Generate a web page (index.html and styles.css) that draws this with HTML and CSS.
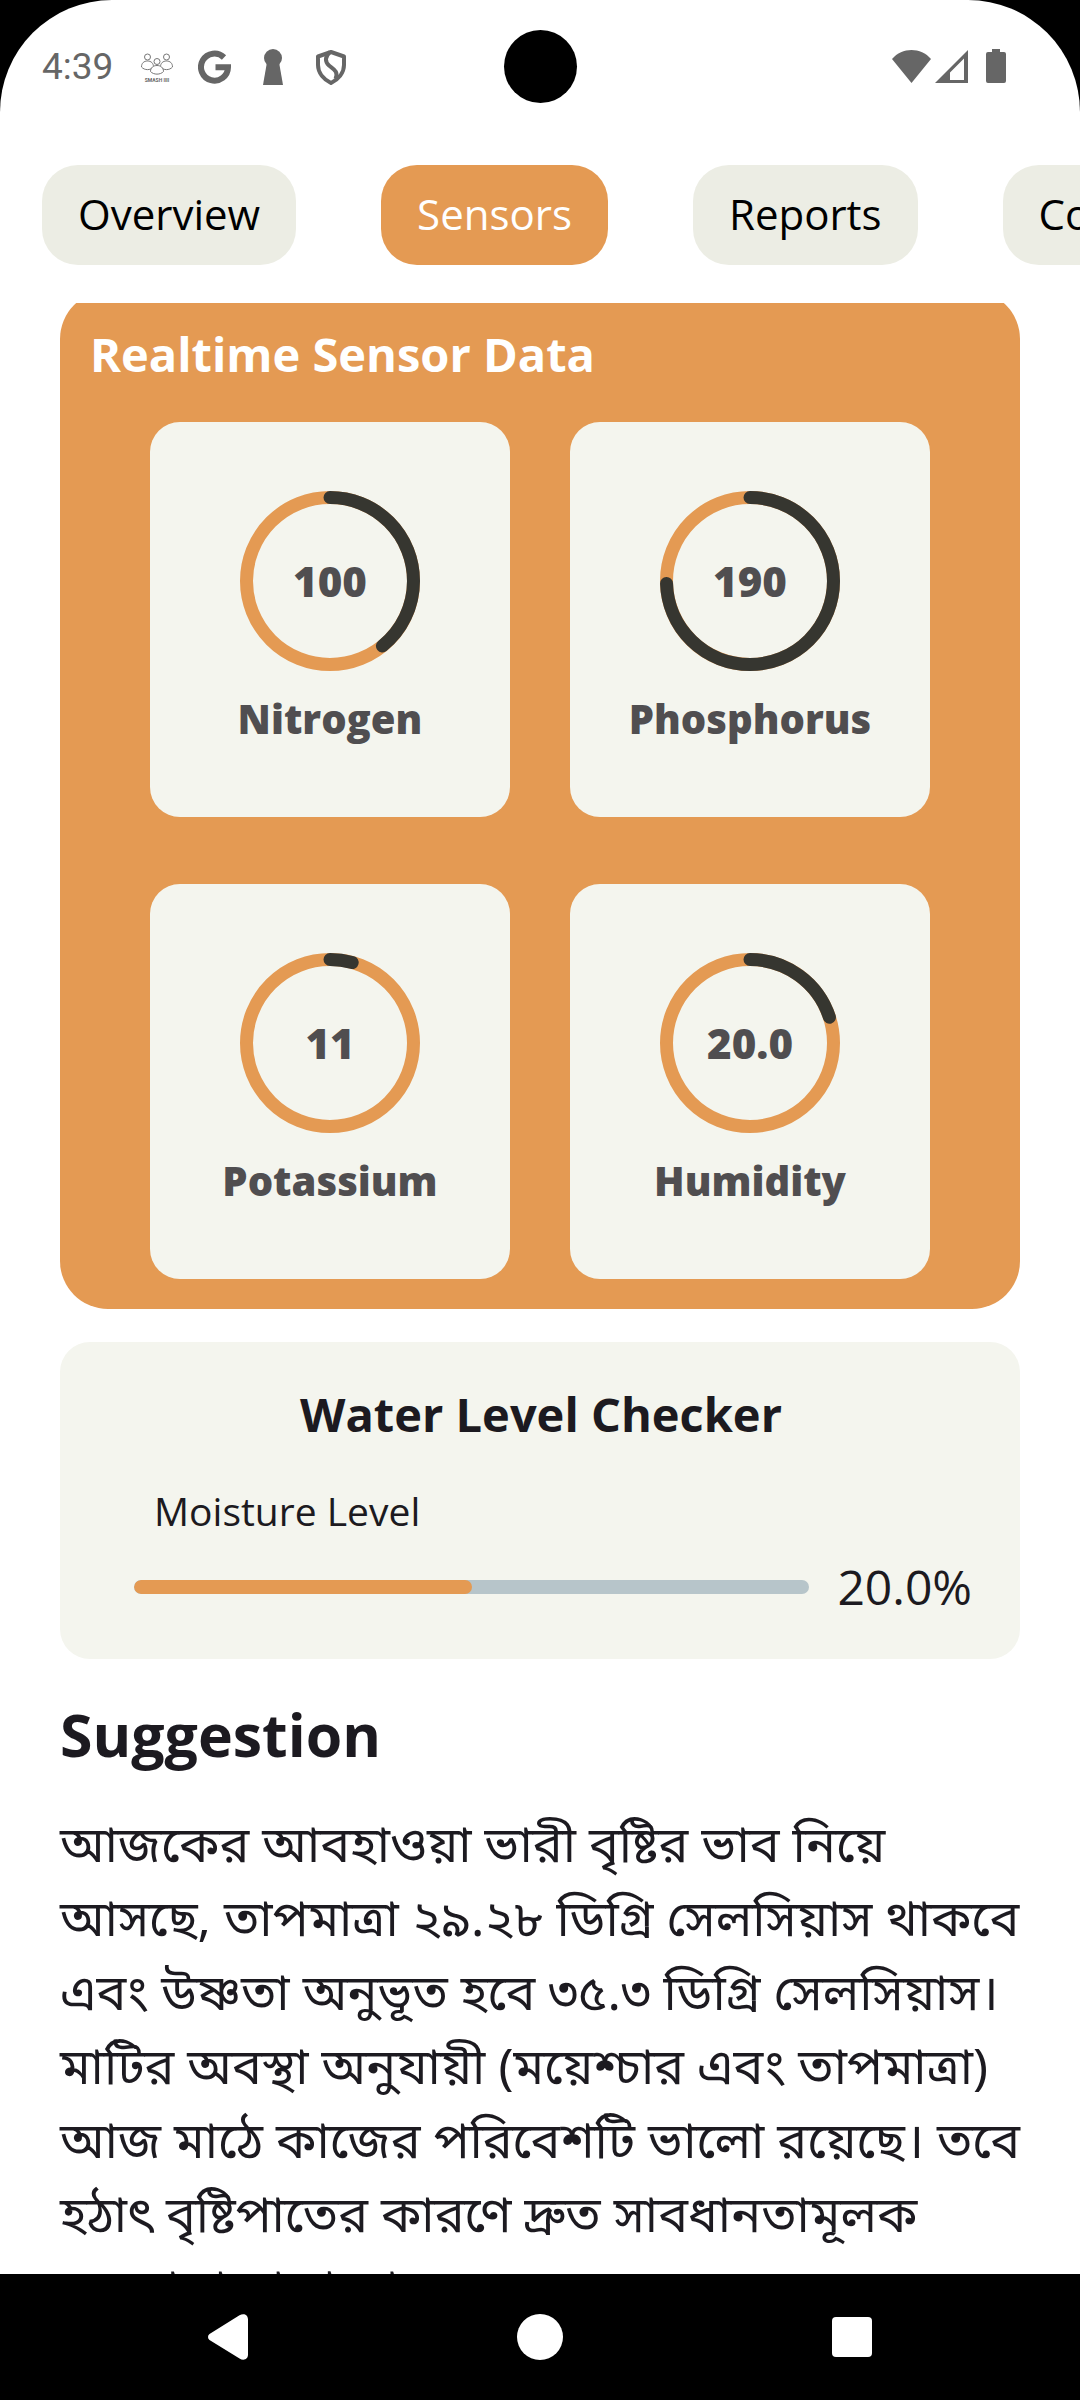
FILE: index.html
```
<!DOCTYPE html>
<html lang="en">
<head>
<meta charset="utf-8">
<meta name="viewport" content="width=device-width, initial-scale=1">
<title>Sensors</title>
<link rel="stylesheet" href="styles.css">
</head>
<body>
<div class="screen">
  <header class="status">
    <div class="status-side">
      <time class="clock">4:39</time>
      <svg class="ico" width="34" height="36" viewBox="0 0 34 36" fill="#fff" stroke="#777" aria-hidden="true">
        <path d="M1.500 18C1.500 14 4 12 7.500 12s6 2 6 6c-3 3.500-9 3.500-12 0zM20.500 18c0-4 2.500-6 6-6s6 2 6 6c-3 3.500-9 3.500-12 0z"/>
        <path d="M10.500 22.500c0-4 3-6 6.500-6s6.500 2 6.500 6c-3 3.500-10 3.500-13 0z"/>
        <circle cx="7.500" cy="8" r="3"/><circle cx="26.500" cy="8" r="3"/><circle cx="17" cy="12.500" r="3"/>
        <text x="17" y="33" font-size="5" font-weight="700" font-family="Roboto" text-anchor="middle" fill="#666" stroke="none">SMASH IIII</text>
      </svg>
      <svg class="ico" width="34" height="36" viewBox="0 0 34 36" aria-hidden="true">
        <path d="M26 8.500A13.500 13.500 0 1 0 30 18.200H17.500" fill="none" stroke="#666" stroke-width="6"/>
      </svg>
      <svg class="ico" width="34" height="36" viewBox="0 0 34 36" fill="#666" aria-hidden="true">
        <circle cx="17" cy="9" r="9"/><path d="M11 13h12l4 23H7z"/>
      </svg>
      <svg class="ico" width="34" height="36" viewBox="0 0 34 36" fill="none" stroke="#666" stroke-width="4" stroke-linejoin="round" aria-hidden="true">
        <path d="M17 3 30 7.500V16c0 8-6 14.500-13 18C10 30.500 4 24 4 16V7.500z"/>
        <path d="M16 3C10.500 8 11 13 15 16.500S25 22 21.500 30"/>
      </svg>
    </div>
    <span class="punch"></span>
    <div class="status-side status-right">
      <svg width="42" height="36" viewBox="0 0 42 36" fill="#666" aria-hidden="true"><path d="M0 10C10-2 29-2 39 10L19.500 34z"/></svg>
      <svg width="52" height="36" viewBox="0 0 52 36" fill="#666" aria-hidden="true"><path d="M34 1v33H1zM30 9.500 16 23.500V31h14z" fill-rule="evenodd"/></svg>
      <svg width="20" height="36" viewBox="0 0 20 36" fill="#666" aria-hidden="true"><path d="M6 0h8v3h4a2 2 0 0 1 2 2v27a2 2 0 0 1-2 2H2a2 2 0 0 1-2-2V5a2 2 0 0 1 2-2h4z"/></svg>
    </div>
  </header>

  <nav class="tabs" aria-label="Sections">
    <button class="tab" type="button">Overview</button>
    <button class="tab tab-active" type="button" aria-current="page">Sensors</button>
    <button class="tab" type="button">Reports</button>
    <button class="tab" type="button">Control</button>
  </nav>

  <main class="content">
    <section class="panel">
      <h2 class="panel-title">Realtime Sensor Data</h2>
      <div class="sensors">
        <article class="sensor">
          <div class="gauge">
            <svg class="ring" viewBox="0 0 180 180" aria-hidden="true"><circle class="ring-track" cx="90" cy="90" r="83.500"/><circle class="ring-value" cx="90" cy="90" r="83.500" pathLength="1000" stroke-dasharray="392 1000"/></svg>
            <span class="gauge-number">100</span>
          </div>
          <h3 class="sensor-name">Nitrogen</h3>
        </article>
        <article class="sensor">
          <div class="gauge">
            <svg class="ring" viewBox="0 0 180 180" aria-hidden="true"><circle class="ring-track" cx="90" cy="90" r="83.500"/><circle class="ring-value" cx="90" cy="90" r="83.500" pathLength="1000" stroke-dasharray="745 1000"/></svg>
            <span class="gauge-number">190</span>
          </div>
          <h3 class="sensor-name">Phosphorus</h3>
        </article>
        <article class="sensor">
          <div class="gauge">
            <svg class="ring" viewBox="0 0 180 180" aria-hidden="true"><circle class="ring-track" cx="90" cy="90" r="83.500"/><circle class="ring-value" cx="90" cy="90" r="83.500" pathLength="1000" stroke-dasharray="43 1000"/></svg>
            <span class="gauge-number">11</span>
          </div>
          <h3 class="sensor-name">Potassium</h3>
        </article>
        <article class="sensor">
          <div class="gauge">
            <svg class="ring" viewBox="0 0 180 180" aria-hidden="true"><circle class="ring-track" cx="90" cy="90" r="83.500"/><circle class="ring-value" cx="90" cy="90" r="83.500" pathLength="1000" stroke-dasharray="200 1000"/></svg>
            <span class="gauge-number">20.0</span>
          </div>
          <h3 class="sensor-name">Humidity</h3>
        </article>
      </div>
    </section>

    <section class="water">
      <h2 class="water-title">Water Level Checker</h2>
      <p class="water-label" id="moisture">Moisture Level</p>
      <div class="water-row">
        <div class="bar" role="progressbar" aria-labelledby="moisture" aria-valuenow="20"><div class="bar-fill" style="width: 50%"></div></div>
        <span class="water-value">20.0%</span>
      </div>
    </section>

    <section class="suggestion">
      <h2 class="suggestion-title">Suggestion</h2>
      <p class="suggestion-text" lang="bn">আজকের আবহাওয়া ভারী বৃষ্টির ভাব নিয়ে<br>আসছে, তাপমাত্রা ২৯.২৮ ডিগ্রি সেলসিয়াস থাকবে<br>এবং উষ্ণতা অনুভূত হবে ৩৫.৩ ডিগ্রি সেলসিয়াস।<br>মাটির অবস্থা অনুযায়ী (ময়েশ্চার এবং তাপমাত্রা)<br>আজ মাঠে কাজের পরিবেশটি ভালো রয়েছে। তবে<br>হঠাৎ বৃষ্টিপাতের কারণে দ্রুত সাবধানতামূলক<br>ব্যবস্থা গ্রহণ প্রয়োজন।</p>
    </section>
  </main>

  <footer class="navbar">
    <button class="nav-btn" type="button" aria-label="Back"><svg width="48" height="48" viewBox="0 0 48 48" fill="#fff"><path d="M5.500 21 35.500 2.300C39.500 0 44 1.500 44 6.500v35c0 5-4.500 6.500-8.500 4L5.500 27c-2-1.500-2-4.500 0-6z"/></svg></button>
    <button class="nav-btn" type="button" aria-label="Home"><svg width="48" height="48" viewBox="0 0 48 48" fill="#fff"><circle cx="24" cy="24" r="23"/></svg></button>
    <button class="nav-btn" type="button" aria-label="Recents"><svg width="48" height="48" viewBox="0 0 48 48" fill="#fff"><rect x="4" y="4" width="40" height="40" rx="4"/></svg></button>
  </footer>
</div>
</body>
</html>
```
FILE: styles.css
```
* {
  box-sizing: border-box;
}

html,
body {
  margin: 0;
  height: 100%;
  background: #000;
}

h2,
h3,
p {
  margin: 0;
}

button {
  border: 0;
  margin: 0;
  font-family: inherit;
}

svg {
  display: block;
}

.screen {
  display: flex;
  flex-direction: column;
  height: 100%;
  overflow: hidden;
  border-radius: 112px 112px 0 0;
  background: #fff;
  color: #1c1a20;
  font-family: "Open Sans", "Noto Sans", sans-serif;
}

/* Status bar */
.status {
  display: flex;
  align-items: center;
  flex: none;
  height: 132px;
  padding: 0 74px 0 42px;
}

.status-side {
  display: flex;
  align-items: center;
  flex: 1;
  padding-top: 2px;
}

.status-right {
  justify-content: flex-end;
}

.clock {
  margin-right: 3px;
  color: #666;
  font: 400 37px/44px Roboto, sans-serif;
}

.ico {
  margin-left: 24px;
}

.punch {
  width: 73px;
  height: 73px;
  margin-left: 32px;
  border-radius: 50%;
  background: #000;
}

/* Section tabs */
.tabs {
  display: flex;
  flex: none;
  gap: 85px;
  overflow: hidden;
  padding: 33px 42px 38px;
}

.tab {
  flex: none;
  padding: 19px 36px 21px;
  border-radius: 36px;
  background: #ecede4;
  color: #000;
  font-size: 42px;
  font-weight: 500;
  line-height: 60px;
}

.tab-active {
  background: #e49a53;
  color: #fff;
}

/* Scrolling content */
.content {
  flex: 1;
  min-height: 0;
  overflow: hidden;
  padding: 0 60px;
}

.panel {
  margin-top: -12px;
  padding: 30px;
  border-radius: 48px;
  background: #e49a53;
}

.panel-title {
  color: #fff;
  font-size: 47px;
  font-weight: 700;
  line-height: 66px;
}

.sensors {
  display: grid;
  grid-template-columns: 1fr 1fr;
  gap: 67px 60px;
  padding: 35px 60px 0;
}

.sensor {
  display: flex;
  flex-direction: column;
  align-items: center;
  padding: 69px 0 70px;
  border-radius: 30px;
  background: #f4f5ee;
  color: #504e50;
}

.gauge {
  display: grid;
  place-items: center;
  width: 180px;
  height: 180px;
}

.ring,
.gauge-number {
  grid-area: 1 / 1;
}

.ring {
  width: 180px;
  height: 180px;
  transform: rotate(-90deg);
  fill: none;
  stroke-width: 13px;
}

.ring-track {
  stroke: #e49a53;
}

.ring-value {
  stroke: #363630;
  stroke-linecap: round;
}

.gauge-number,
.sensor-name {
  font-weight: 800;
  line-height: 57px;
}

.gauge-number {
  padding-bottom: 2px;
  font-size: 42px;
}

.sensor-name {
  margin-top: 19px;
  font-size: 40px;
}

/* Water level */
.water {
  margin-top: 33px;
  padding: 39px 48px 42px 74px;
  border-radius: 30px;
  background: #f4f5ee;
}

.water-title {
  padding-right: 24px;
  font-size: 47px;
  font-weight: 700;
  line-height: 66px;
  text-align: center;
}

.water-label {
  margin-top: 35px;
  padding-left: 20px;
  font-size: 39px;
  line-height: 57px;
}

.water-row {
  display: flex;
  align-items: center;
  gap: 28px;
  margin-top: 18px;
}

.bar {
  flex: 1;
  height: 14px;
  overflow: hidden;
  border-radius: 7px;
  background: #b7c5ca;
}

.bar-fill {
  height: 14px;
  border-radius: 7px;
  background: #e49a53;
}

.water-value {
  font-size: 48px;
  line-height: 60px;
}

/* Suggestion */
.suggestion {
  padding-top: 36px;
}

.suggestion-title {
  font-size: 59px;
  font-weight: 700;
  line-height: 78px;
}

.suggestion-text {
  margin-top: 39px;
  font-family: "Noto Sans Bengali", "Noto Sans", sans-serif;
  font-size: 50px;
  line-height: 74px;
  white-space: nowrap;
}

/* System navigation */
.navbar {
  display: flex;
  align-items: center;
  justify-content: center;
  flex: none;
  gap: 264px;
  height: 126px;
  background: #000;
}

.nav-btn {
  padding: 0;
  background: none;
}
```
